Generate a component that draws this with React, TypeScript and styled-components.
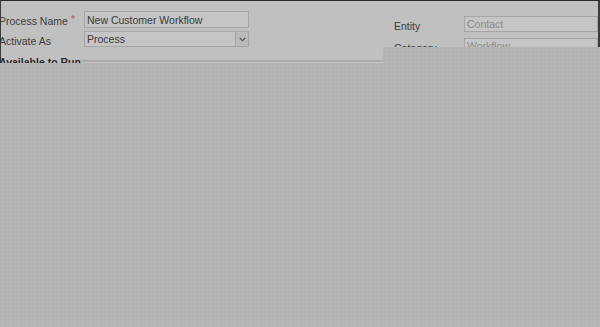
import React from "react";
import styled, { createGlobalStyle } from "styled-components";

const Global = createGlobalStyle`
  html, body { margin: 0; padding: 0; }
  body { font-family: "Liberation Sans", Arial, sans-serif; }
`;

const Page = styled.div`
  width: 600px;
  height: 327px;
  overflow: hidden;
  background-color: #b5b5b5;
  background-image:
    radial-gradient(circle at 1.5px 1.5px, #d2d2d2 0.6px, transparent 1px),
    radial-gradient(circle at 2.5px 2.5px, #9c9c9c 0.5px, transparent 0.9px);
  background-size: 8px 8px;
  background-position: 2px 1px;
  display: flex;
  align-items: flex-start;
`;

const Panel = styled.div<{ $w: number; $h: number; $padTop: number; $padLeft: number }>`
  box-sizing: border-box;
  width: ${(p) => p.$w}px;
  height: ${(p) => p.$h}px;
  background: #c0c0c0;
  border-top: 1px solid #2a2a2a;
  padding: ${(p) => p.$padTop - 1}px 0 0 ${(p) => p.$padLeft}px;
  overflow: hidden;
  display: flex;
  flex-direction: column;
  position: relative;
`;

const LeftPanel = styled(Panel)`
  border-left: 1px solid #3a3a3a;
  gap: 3px;
`;

const RightPanel = styled(Panel)`
  border-right: 2px solid #3c3c3c;
  gap: 6px;
`;

const Row = styled.div<{ $label: number; $h: number }>`
  display: grid;
  grid-template-columns: ${(p) => p.$label}px 1fr;
  align-items: center;
  height: ${(p) => p.$h}px;
  flex-shrink: 0;
`;

const Label = styled.div<{ $shift?: number }>`
  font-size: 10.5px;
  color: #3c3c3c;
  white-space: nowrap;
  margin-left: ${(p) => p.$shift ?? 0}px;
  padding-top: 3px;
`;

const Req = styled.span`
  color: #b85a5a;
  margin-left: 3px;
  font-size: 11px;
  position: relative;
  top: -2px;
`;

const Field = styled.div<{ $w?: number; $muted?: boolean }>`
  box-sizing: border-box;
  width: ${(p) => (p.$w ? `${p.$w}px` : "auto")};
  height: 100%;
  background: #c5c5c5;
  border: 1px solid #a6a6a6;
  font-size: 10.5px;
  color: ${(p) => (p.$muted ? "#8c8c8c" : "#3a3a3a")};
  padding: 0 0 0 2px;
  display: flex;
  align-items: center;
  justify-content: space-between;
  white-space: nowrap;
`;

const DropBtn = styled.div`
  box-sizing: border-box;
  width: 13px;
  height: 100%;
  border-left: 1px solid #a6a6a6;
  background: #bababa;
  display: flex;
  align-items: center;
  justify-content: center;
`;

const Section = styled.div`
  position: relative;
  height: 20px;
  margin-top: 6px;
  flex-shrink: 0;
`;

const SectionTitle = styled.div`
  font-size: 10.5px;
  font-weight: bold;
  color: #2a2a2a;
  margin-left: -2px;
  white-space: nowrap;
`;

const SectionRule = styled.div`
  position: absolute;
  left: 79px;
  right: 0;
  top: 4px;
  height: 2px;
  background: linear-gradient(#a8a8a8, #b0b0b0);
`;

export default function App() {
  return (
    <>
      <Global />
      <Page>
        <LeftPanel $w={383} $h={63} $padTop={11} $padLeft={0}>
          <Row $label={83} $h={17}>
            <Label $shift={-2}>
              Process Name<Req>*</Req>
            </Label>
            <Field $w={165}>New Customer Workflow</Field>
          </Row>
          <Row $label={83} $h={16}>
            <Label $shift={-2}>Activate As</Label>
            <Field $w={165}>
              <span>Process</span>
              <DropBtn>
                <svg width="7" height="5" viewBox="0 0 7 5">
                  <path d="M0.8 1 L3.5 3.7 L6.2 1" fill="none" stroke="#555" strokeWidth="1.1" />
                </svg>
              </DropBtn>
            </Field>
          </Row>
          <Section>
            <SectionTitle>Available to Run</SectionTitle>
            <SectionRule />
          </Section>
        </LeftPanel>
        <RightPanel $w={217} $h={47} $padTop={16} $padLeft={11}>
          <Row $label={70} $h={16}>
            <Label>Entity</Label>
            <Field $muted>Contact</Field>
          </Row>
          <Row $label={70} $h={16}>
            <Label>Category</Label>
            <Field $muted>Workflow</Field>
          </Row>
        </RightPanel>
      </Page>
    </>
  );
}
